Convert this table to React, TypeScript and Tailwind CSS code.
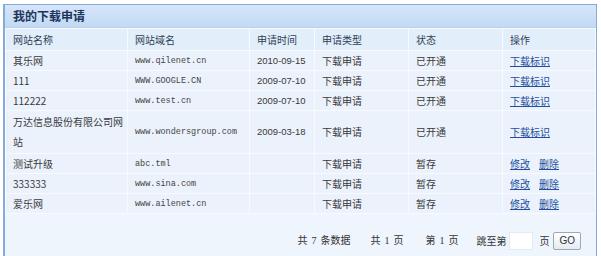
import React from "react";

interface Row {
  name: string;
  domain: string;
  date: string;
  type: string;
  status: string;
  open: boolean;
}

const rows: Row[] = [
  { name: "其乐网", domain: "www.qilenet.cn", date: "2010-09-15", type: "下载申请", status: "已开通", open: true },
  { name: "111", domain: "WWW.GOOGLE.CN", date: "2009-07-10", type: "下载申请", status: "已开通", open: true },
  { name: "112222", domain: "www.test.cn", date: "2009-07-10", type: "下载申请", status: "已开通", open: true },
  { name: "万达信息股份有限公司网站", domain: "www.wondersgroup.com", date: "2009-03-18", type: "下载申请", status: "已开通", open: true },
  { name: "测试升级", domain: "abc.tml", date: "", type: "下载申请", status: "暂存", open: false },
  { name: "333333", domain: "www.sina.com", date: "", type: "下载申请", status: "暂存", open: false },
  { name: "爱乐网", domain: "www.ailenet.cn", date: "", type: "下载申请", status: "暂存", open: false },
];

const cjk = "font-['Noto_Sans_CJK_SC','Liberation_Sans',sans-serif]";
const cell = "border border-[#f7faff] pl-[7px] pr-[2px] py-0 align-middle leading-[18px]";

const Num = ({ n }: { n: number }) => (
  <span className="mx-[4px] font-['Liberation_Serif',serif] text-[10px]">{n}</span>
);

const App = () => {
  return (
    <div className={`bg-white w-[601px] h-[256px] overflow-hidden ${cjk} text-[10px] text-[#3a3a3a]`}>
      <div className="ml-[3px] mt-[4px] w-[594px] border-l-2 border-r border-t border-[#86abd8] bg-[#eaf2fc]">
        {/* Title bar */}
        <div className="h-[23px] flex items-center pl-[8px] bg-gradient-to-b from-[#d6e6fa] to-[#c3d9f4] border-b border-[#b9d1ef]">
          <span className="text-[12px] font-bold text-[#1d355c]">我的下载申请</span>
        </div>

        {/* Table */}
        <table className="w-[590px] table-fixed border-collapse">
          <colgroup>
            <col className="w-[122px]" />
            <col className="w-[122px]" />
            <col className="w-[65px]" />
            <col className="w-[94px]" />
            <col className="w-[94px]" />
            <col className="w-[93px]" />
          </colgroup>
          <thead>
            <tr className="bg-[#e3eefb] h-[22px]">
              {["网站名称", "网站域名", "申请时间", "申请类型", "状态", "操作"].map((h) => (
                <th key={h} className={`${cell} font-normal text-left text-[#2f3f55]`}>
                  {h}
                </th>
              ))}
            </tr>
          </thead>
          <tbody>
            {rows.map((r, i) => (
              <tr key={i} className="bg-[#ebf2fc] h-[20px]">
                <td className={`${cell} ${i === 3 ? "py-[1px]" : ""}`}>
                  <div className={i === 3 ? "leading-[20px]" : "leading-[18px]"}>{r.name}</div>
                </td>
                <td className={`${cell} font-['Liberation_Mono',monospace] text-[8.5px] text-[#444]`}>{r.domain}</td>
                <td className={`${cell} font-['Liberation_Sans',sans-serif] text-[9.5px]`}>{r.date}</td>
                <td className={cell}>{r.type}</td>
                <td className={cell}>{r.status}</td>
                <td className={cell}>
                  {r.open ? (
                    <a href="#" className="text-[#1f4f9d] underline">下载标识</a>
                  ) : (
                    <span className="flex gap-[9px]">
                      <a href="#" className="text-[#1f4f9d] underline">修改</a>
                      <a href="#" className="text-[#1f4f9d] underline">删除</a>
                    </span>
                  )}
                </td>
              </tr>
            ))}
          </tbody>
        </table>

        {/* Pager */}
        <div className="bg-[#eff5fd] pt-[17px] pb-[20px] flex items-center justify-end pr-[15px] text-[#333] leading-[18px]">
          <span className="mr-[20px]">共<Num n={7} />条数据</span>
          <span className="mr-[22px]">共<Num n={1} />页</span>
          <span className="mr-[18px]">第<Num n={1} />页</span>
          <span className="mr-[3px]">跳至第</span>
          <input className="w-[24px] h-[18px] bg-white border border-[#e2ebf5] outline-none mr-[6px]" />
          <span className="mr-[4px]">页</span>
          <button className="h-[18px] px-[5px] border border-[#9aa8b8] rounded-[2px] bg-gradient-to-b from-[#ffffff] to-[#e6ebf1] text-[10px] font-['Liberation_Sans',sans-serif] text-[#333] leading-none">
            GO
          </button>
        </div>
      </div>
    </div>
  );
};

export default App;
